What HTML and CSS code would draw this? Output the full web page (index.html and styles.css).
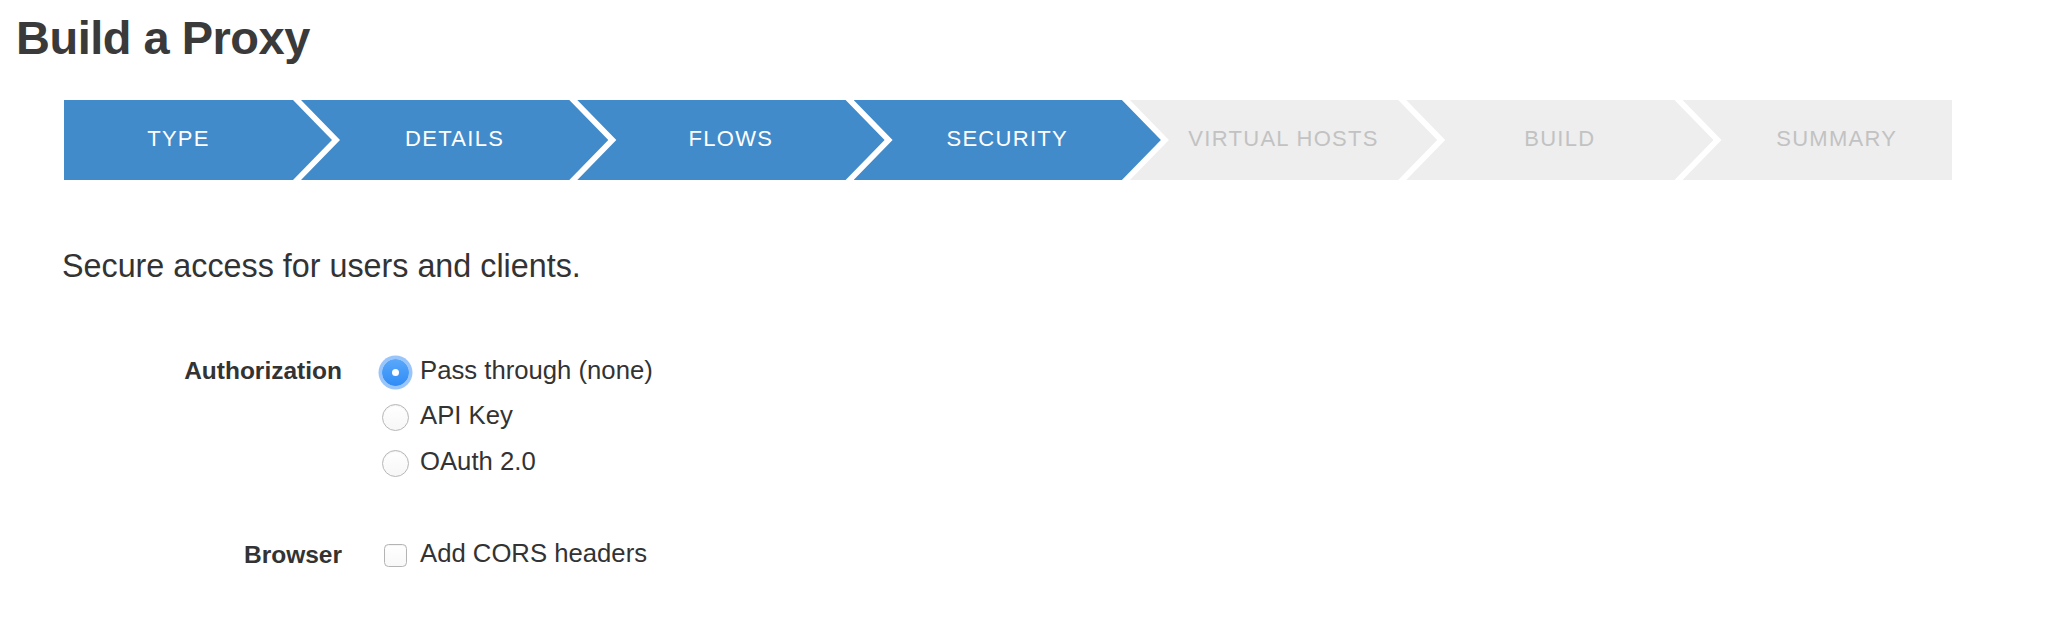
FILE: index.html
```html
<!DOCTYPE html>
<html lang="en">
<head>
<meta charset="utf-8">
<title>Build a Proxy</title>
<link rel="stylesheet" href="styles.css">
</head>
<body>
<div class="page">
  <h1 class="title">Build a Proxy</h1>

  <div class="steps">
    <div class="step step--first step--done"><span>TYPE</span></div>
    <div class="step step--mid step--done"><span>DETAILS</span></div>
    <div class="step step--mid step--done"><span>FLOWS</span></div>
    <div class="step step--mid step--done"><span>SECURITY</span></div>
    <div class="step step--mid"><span>VIRTUAL HOSTS</span></div>
    <div class="step step--mid"><span>BUILD</span></div>
    <div class="step step--last"><span>SUMMARY</span></div>
  </div>

  <p class="intro">Secure access for users and clients.</p>

  <div class="form">
    <div class="form-row">
      <div class="form-label">Authorization</div>
      <div class="form-controls">
        <label class="option">
          <span class="control"><span class="radio radio--checked"></span></span>
          <span class="option-text">Pass through (none)</span>
        </label>
        <label class="option">
          <span class="control"><span class="radio"></span></span>
          <span class="option-text">API Key</span>
        </label>
        <label class="option">
          <span class="control"><span class="radio"></span></span>
          <span class="option-text">OAuth 2.0</span>
        </label>
      </div>
    </div>

    <div class="form-row form-row--browser">
      <div class="form-label">Browser</div>
      <div class="form-controls">
        <label class="option">
          <span class="control"><span class="checkbox"></span></span>
          <span class="option-text">Add CORS headers</span>
        </label>
      </div>
    </div>
  </div>
</div>
</body>
</html>
```

FILE: styles.css
```css
html, body {
  margin: 0;
  padding: 0;
  background: #ffffff;
}

body {
  font-family: "Liberation Sans", Arial, Helvetica, sans-serif;
  color: #333333;
}

.page {
  width: 2068px;
  height: 644px;
  overflow: hidden;
}

.title {
  margin: 13.5px 0 0 16px;
  font-size: 47px;
  line-height: 47px;
  font-weight: 700;
  letter-spacing: -0.5px;
  color: #3a3a3a;
}

/* Wizard step bar */
.steps {
  display: flex;
  height: 80px;
  margin: 39.5px 0 0 64px;
}

.step {
  flex: none;
  height: 80px;
  display: flex;
  align-items: center;
  justify-content: center;
  box-sizing: border-box;
  background: #eeeeee;
  color: #c2c2c2;
  font-size: 22px;
  letter-spacing: 1.3px;
  padding-bottom: 3px;
}

.step span {
  white-space: nowrap;
}

.step--done {
  background: #428bca;
  color: #ffffff;
}

.step--first {
  width: 268px;
  padding-right: 39px;
  clip-path: polygon(0 0, calc(100% - 39px) 0, 100% 50%, calc(100% - 39px) 100%, 0 100%);
}

.step--mid {
  width: 307.3px;
  margin-left: -31px;
  padding-left: 39px;
  padding-right: 39px;
  clip-path: polygon(0 0, calc(100% - 39px) 0, 100% 50%, calc(100% - 39px) 100%, 0 100%, 39px 50%);
}

.step--last {
  width: 269.5px;
  margin-left: -31px;
  padding-left: 39px;
  clip-path: polygon(0 0, 100% 0, 100% 100%, 0 100%, 39px 50%);
}

/* Intro */
.intro {
  margin: 70px 0 0 62px;
  font-size: 32.3px;
  line-height: 32px;
  color: #333333;
}

/* Form */
.form {
  margin-top: 67.5px;
}

.form-row {
  display: flex;
  align-items: flex-start;
}

.form-row--browser {
  margin-top: 47px;
}

.form-label {
  width: 342px;
  flex: none;
  text-align: right;
  font-size: 24.5px;
  font-weight: 700;
  line-height: 41px;
  color: #333333;
}

.form-row--browser .form-label {
  line-height: 43px;
}

.form-controls {
  margin-left: 40px;
  display: flex;
  flex-direction: column;
}

.option {
  display: flex;
  align-items: center;
  height: 45.5px;
}

.control {
  width: 27px;
  height: 27px;
  flex: none;
  display: flex;
  align-items: center;
  justify-content: center;
  margin-right: 11px;
}

.option-text {
  font-size: 25.7px;
  line-height: 45.5px;
  padding-bottom: 4px;
  color: #333333;
  white-space: nowrap;
}

.radio {
  width: 27px;
  height: 27px;
  box-sizing: border-box;
  border-radius: 50%;
  border: 1px solid #b7b7b7;
  background: linear-gradient(#ffffff, #f7f7f7);
  box-shadow: inset 0 1px 1px rgba(0, 0, 0, 0.06);
  display: block;
  position: relative;
}

.radio--checked {
  border: none;
  background: linear-gradient(#5aa8fb, #2f8cf5);
  box-shadow: 0 0 0 3.5px rgba(120, 178, 250, 0.75);
}

.radio--checked::after {
  content: "";
  position: absolute;
  left: 50%;
  top: 50%;
  width: 7.5px;
  height: 7.5px;
  margin: -3.75px 0 0 -3.75px;
  border-radius: 50%;
  background: #ffffff;
}

.checkbox {
  display: block;
  width: 23px;
  height: 23px;
  box-sizing: border-box;
  border: 1px solid #b4b4b4;
  border-radius: 4.5px;
  background: linear-gradient(#ffffff, #f8f8f8);
  box-shadow: inset 0 1px 1px rgba(0, 0, 0, 0.05);
}
```
